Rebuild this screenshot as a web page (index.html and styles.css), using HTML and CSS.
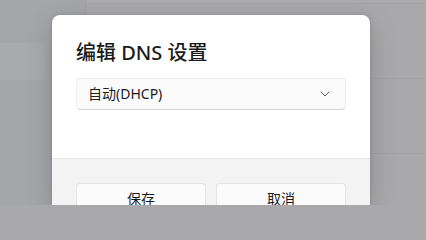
FILE: index.html
```html
<!DOCTYPE html>
<html lang="zh-CN">
<head>
<meta charset="utf-8">
<title>编辑 DNS 设置</title>
<link rel="stylesheet" href="styles.css">
</head>
<body>
<div class="backdrop">
  <aside class="sidebar">
    <div class="nav-item"></div>
  </aside>
  <main class="main">
    <div class="strip"></div>
    <div class="card card-a"></div>
    <div class="card card-b"></div>
    <div class="card card-c"></div>
  </main>
</div>
<div class="dialog" role="dialog">
  <div class="dialog-body">
    <h1 class="dialog-title">编辑 DNS 设置</h1>
    <div class="select">
      <span class="select-text">自动(DHCP)</span>
      <svg class="chevron" width="10" height="6" viewBox="0 0 10 6"><path d="M1 1 L5 5 L9 1" fill="none" stroke="#5f5f5f" stroke-width="1" stroke-linecap="round" stroke-linejoin="round"/></svg>
    </div>
  </div>
  <div class="dialog-footer">
    <button class="btn">保存</button>
    <button class="btn">取消</button>
  </div>
</div>
</body>
</html>
```
FILE: styles.css
```css
* { box-sizing: border-box; }
html, body {
  margin: 0;
  padding: 0;
  width: 426px;
  height: 205px;
  overflow: hidden;
}
body {
  font-family: "Noto Sans", "Noto Sans CJK SC", sans-serif;
  background: #a9a9ab;
  position: relative;
}
.backdrop {
  display: flex;
  height: 205px;
}
.sidebar {
  width: 86px;
  background: #a4a6a9;
  border-right: 1px solid #a0a0a2;
  padding-top: 43px;
}
.nav-item {
  width: 45px;
  height: 37px;
  background: #a8aaac;
  border-radius: 0 4px 4px 0;
}
.main {
  flex: 1;
  display: flex;
  flex-direction: column;
}
.strip {
  height: 4px;
  background: #acacae;
  border-bottom: 1px solid #a3a3a5;
}
.card {
  background: #a9a9ab;
  border-bottom: 1px solid #a3a3a5;
}
.card-a { height: 75px; }
.card-b { height: 75px; }
.card-c { flex: 1; border-bottom: none; }

.dialog {
  position: absolute;
  left: 52px;
  top: 15px;
  width: 318px;
  height: 190px;
  background: #ffffff;
  border-radius: 8px 8px 0 0;
  overflow: hidden;
  box-shadow: 0 8px 28px rgba(0, 0, 0, 0.18), 0 0 4px rgba(0, 0, 0, 0.12);
  display: flex;
  flex-direction: column;
}
.dialog-body {
  padding: 24px 24px 0 24px;
  height: 143px;
  flex: none;
}
.dialog-title {
  margin: 0 0 11px 0;
  font-size: 20px;
  line-height: 28px;
  font-weight: 500;
  color: #1a1a1a;
}
.select {
  height: 32px;
  display: flex;
  align-items: center;
  justify-content: space-between;
  padding: 0 15px 0 11px;
  background: #fbfbfb;
  border: 1px solid #ececec;
  border-bottom-color: #d6d6d6;
  border-radius: 4px;
}
.select-text {
  font-size: 14px;
  color: #1b1b1b;
  line-height: 20px;
}
.chevron { display: block; }
.dialog-footer {
  flex: 1;
  background: #f3f3f3;
  border-top: 1px solid #e5e5e5;
  padding: 24px 24px 0 24px;
  display: flex;
  gap: 10px;
  align-items: flex-start;
  overflow: hidden;
}
.btn {
  flex: 1;
  flex-shrink: 0;
  height: 32px;
  font-family: inherit;
  font-size: 14px;
  color: #1b1b1b;
  background: #fbfbfb;
  border: 1px solid #e5e5e5;
  border-bottom-color: #cccccc;
  border-radius: 4px;
  padding: 0 11px;
  line-height: 20px;
}
```
